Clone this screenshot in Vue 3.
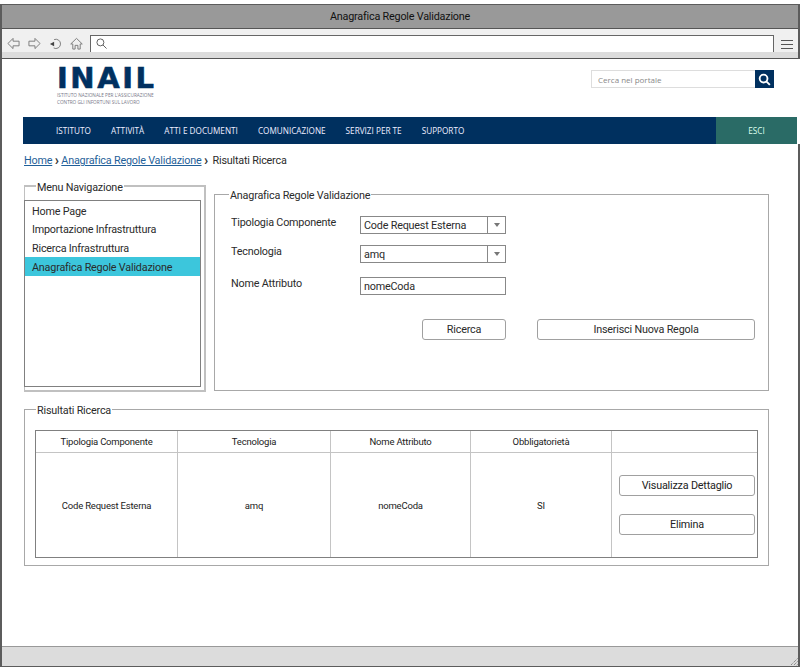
<script setup>
const navItems = ['ISTITUTO', 'ATTIVITÀ', 'ATTI E DOCUMENTI', 'COMUNICAZIONE', 'SERVIZI PER TE', 'SUPPORTO']
const menu = ['Home Page', 'Importazione Infrastruttura', 'Ricerca Infrastruttura', 'Anagrafica Regole Validazione']
const heads = ['Tipologia Componente', 'Tecnologia', 'Nome Attributo', 'Obbligatorietà', '']
</script>

<template>
  <div class="page">
    <div class="window">
      <div class="titlebar">Anagrafica Regole Validazione</div>
      <div class="toolbar">
        <div class="toolrow">
          <div class="tools">
            <svg class="ic" viewBox="0 0 14 14"><path d="M1 7 6.500 1.500V4.500H13V9.500H6.500V12.500Z" /></svg>
            <svg class="ic" viewBox="0 0 14 14"><path d="M13 7 7.500 1.500V4.500H1V9.500H7.500V12.500Z" /></svg>
            <svg class="ic" viewBox="0 0 14 14"><path d="M5.500 2.800A5 5 0 1 1 5 11.800" /><path class="solid" d="M1 7.500 5.500 5V10Z" /></svg>
            <svg class="ic" viewBox="0 0 14 14"><path d="M.8 7.500 7 1.500 13.200 7.500H11V13H8.500V9H5.500V13H3V7.500Z" /></svg>
          </div>
          <div class="address">
            <svg class="lens" viewBox="0 0 12 12"><circle cx="4.800" cy="4.800" r="3.800" /><path d="M7.600 7.600 11.500 11.500" /></svg>
          </div>
          <div class="burger"><i></i><i></i><i></i></div>
        </div>
        <div class="toolstrip"></div>
      </div>

      <div class="content">
        <header class="site">
          <div class="brandrow">
            <div class="logo">
              <svg class="logoword" viewBox="0 0 97 21"><text x="0" y="21" textLength="97" lengthAdjust="spacing">INAIL</text></svg>
              <div class="logotag">ISTITUTO NAZIONALE PER L'ASSICURAZIONE</div>
              <div class="logotag">CONTRO GLI INFORTUNI SUL LAVORO</div>
            </div>
            <div class="search">
              <span class="searchtext">Cerca nel portale</span>
              <span class="searchbtn">
                <svg viewBox="0 0 14 14"><circle cx="6" cy="6" r="4.200" /><path d="M9.200 9.200 12.800 12.800" /></svg>
              </span>
            </div>
          </div>
          <nav class="nav">
            <a v-for="item in navItems" :key="item" class="navitem">{{ item }}</a>
            <a class="esci">ESCI</a>
          </nav>
        </header>

        <main class="main">
          <div class="crumbs">
            <a class="link">Home</a><span class="sep">›</span><a class="link">Anagrafica Regole Validazione</a><span class="sep">›</span><span class="last">Risultati Ricerca</span>
          </div>

          <div class="columns">
            <fieldset class="box menubox">
              <legend>Menu Navigazione</legend>
              <ul class="menu">
                <li v-for="(m, i) in menu" :key="m" :class="['menuitem', 'm' + i, { active: i === 3 }]">{{ m }}</li>
              </ul>
            </fieldset>

            <fieldset class="box formbox">
              <legend>Anagrafica Regole Validazione</legend>
              <div class="formgrid">
                <label class="lab">Tipologia Componente</label>
                <div class="select"><span class="val">Code Request Esterna</span><span class="arrow"></span></div>
                <label class="lab">Tecnologia</label>
                <div class="select"><span class="val">amq</span><span class="arrow"></span></div>
                <label class="lab">Nome Attributo</label>
                <div class="select"><span class="val">nomeCoda</span></div>
              </div>
              <div class="actions">
                <button class="btn search-btn">Ricerca</button>
                <button class="btn new-btn">Inserisci Nuova Regola</button>
              </div>
            </fieldset>
          </div>

          <fieldset class="box results">
            <legend>Risultati Ricerca</legend>
            <div class="table">
              <div v-for="h in heads" :key="h" class="th">{{ h }}</div>
              <div class="td">Code Request Esterna</div>
              <div class="td">amq</div>
              <div class="td">nomeCoda</div>
              <div class="td">SI</div>
              <div class="td tdbtns">
                <button class="btn rowbtn">Visualizza Dettaglio</button>
                <button class="btn rowbtn">Elimina</button>
              </div>
            </div>
          </fieldset>
        </main>
      </div>

      <div class="status">
        <svg class="grip" viewBox="0 0 10 10"><path d="M9.500 2.500 2.500 9.500M9.500 5.500 5.500 9.500M9.500 8.500 8.500 9.500" /></svg>
      </div>
    </div>
  </div>
</template>

<style>
html, body { margin: 0; background: #fff; }
</style>

<style scoped>
.page {
  width: 801px;
  height: 667px;
  padding-top: 4px;
  box-sizing: border-box;
  overflow: hidden;
  font-family: Roboto, "Noto Sans", sans-serif;
  font-size: 10.800px;
  letter-spacing: -.2px;
  color: #2b2b2b;
}
.window {
  width: 800px;
  height: 663px;
  box-sizing: border-box;
  border: 2px solid #5c5c5c;
  border-top-width: 1px;
  border-bottom-width: 1px;
  display: flex;
  flex-direction: column;
}
.titlebar {
  height: 23px;
  background: #999;
  border-bottom: 1px solid #555;
  text-align: center;
  line-height: 24px;
  color: #111;
  flex: none;
}
.toolbar {
  height: 30px;
  background: #f0f0f0;
  border-bottom: 1px solid #555;
  box-sizing: border-box;
  flex: none;
  display: flex;
  flex-direction: column;
}
.toolrow { height: 23px; display: flex; align-items: flex-start; }
.toolstrip { flex: 1; background: #dcdcdc; }
.tools { display: flex; width: 88px; padding: 8px 0 0 5px; gap: 8px; box-sizing: border-box; }
.ic { width: 13px; height: 13px; fill: none; stroke: #777; stroke-width: 1; }
.ic .solid { fill: #444; stroke: none; }
.address {
  width: 684px;
  height: 17px;
  margin-top: 6px;
  background: #fff;
  border: 1px solid #666;
  border-bottom: 0;
  box-sizing: border-box;
  padding: 2px 0 0 5px;
  flex: none;
}
.lens { display: block; width: 11px; height: 11px; fill: none; stroke: #555; stroke-width: 1; }
.burger { margin: 11px 0 0 7px; width: 12px; display: flex; flex-direction: column; gap: 3px; }
.burger i { display: block; height: 1px; background: #555; }

.content { flex: 1; min-height: 0; background: #fff; }
.site {
  position: relative;
  width: 799px;
  height: 85px;
  background: #fff;
  padding-left: 21px;
  box-sizing: border-box;
  display: flex;
  flex-direction: column;
  font-family: "Open Sans", "Noto Sans", sans-serif;
  letter-spacing: 0;
}
.brandrow { height: 58px; display: flex; justify-content: space-between; }
.logo { margin: 8px 0 0 34px; }
.logoword {
  display: block;
  width: 97px;
  height: 21px;
  overflow: visible;
  font-family: "DejaVu Sans", sans-serif;
  font-weight: 700;
  font-size: 29px;
  fill: #003060;
  stroke: #003060;
  stroke-width: .6;
}
.logotag { font-size: 4.700px; line-height: 6.500px; color: #778; white-space: nowrap; }
.logoword + .logotag { margin-top: 4px; }
.search {
  display: flex;
  margin: 11px 27px 0 0;
  width: 183px;
  height: 18px;
  box-sizing: border-box;
  border: 1px solid #ddd;
  border-right: 0;
  align-items: center;
  justify-content: space-between;
}
.searchtext { font-size: 8px; color: #888; margin-left: 6px; }
.searchbtn { width: 19px; height: 18px; background: #00305f; display: flex; align-items: center; justify-content: center; margin: -1px 0; }
.searchbtn svg { width: 13px; height: 13px; fill: none; stroke: #fff; stroke-width: 2; }
.nav {
  height: 27px;
  width: 774px;
  background: #00305f;
  display: flex;
  align-items: center;
  padding-left: 33px;
  box-sizing: border-box;
  gap: 20px;
  font-size: 8.200px;
  color: #eef;
}
.navitem { white-space: nowrap; }
.esci {
  margin-left: auto;
  width: 81px;
  height: 27px;
  background: #2a6b66;
  color: #dfe;
  text-align: center;
  line-height: 27px;
}

.main { padding: 8px 0 0 22px; }
.crumbs { height: 18px; line-height: 18px; white-space: nowrap; display: flex; }
.link { color: #1f5f99; text-decoration: underline; }
.sep { margin: 0 2.500px; color: #333; font-weight: 700; font-size: 14px; line-height: 16px; }
.last { margin-left: 2px; }
.box {
  margin: 0;
  padding: 0;
  min-width: 0;
  border: 1px solid #a8a8a8;
  box-sizing: border-box;
  position: relative;
}
legend { margin-left: 11px; padding: 4px 1px 0; line-height: 14px; }
.formbox legend { margin-left: 14px; }
.columns { display: flex; align-items: flex-start; margin-top: 7px; }
.menubox {
  width: 182px;
  height: 215px;
  border-width: 2px 2px 2px 1px;
  border-color: #c0c0c0;
  padding: 0 3px 2px 0;
  display: flex;
  flex-direction: column;
}
.menu {
  list-style: none;
  margin: 5px 0 0 -1px;
  padding: 0;
  height: 187px;
  border: 1px solid #808080;
  box-sizing: border-box;
}
.menuitem { padding-left: 7px; height: 19px; line-height: 21px; white-space: nowrap; }
.m1 { height: 18px; line-height: 20px; }
.active { background: #3cc6dc; }
.formbox { width: 555px; height: 206px; margin: 8px 0 0 8px; }
.formgrid { display: grid; grid-template-columns: 129px 146px; grid-template-rows: 29px 32px 18px; margin: 13px 0 0 16px; }
.lab { line-height: 14px; white-space: nowrap; }
.select {
  height: 18px;
  border: 1px solid #888;
  box-sizing: border-box;
  display: flex;
  align-items: center;
  background: #fff;
}
.val { flex: 1; padding-left: 3px; white-space: nowrap; }
.arrow { width: 17px; height: 16px; border-left: 1px solid #888; position: relative; flex: none; }
.arrow::after {
  content: "";
  position: absolute;
  left: 6px;
  top: 6px;
  border: 3px solid transparent;
  border-top: 4px solid #777;
  border-bottom: 0;
}
.actions { display: flex; margin: 24px 0 0 207px; gap: 31px; }
.btn {
  font: inherit;
  letter-spacing: inherit;
  color: inherit;
  background: #fff;
  border: 1px solid #a0a0a0;
  border-radius: 3px;
  height: 21px;
  padding: 0;
  box-sizing: border-box;
}
.search-btn { width: 84px; }
.new-btn { width: 218px; }
.results { width: 745px; height: 166px; margin-top: 8px; }
.table {
  display: grid;
  width: 723px;
  height: 128px;
  margin: 12px 0 0 10px;
  box-sizing: border-box;
  border: 1px solid #808080;
  grid-template-columns: 142px 153px 140px 141px 1fr;
  grid-template-rows: 22px 1fr;
  font-size: 9.500px;
  text-align: center;
  color: #222;
}
.th, .td { display: flex; align-items: center; justify-content: center; border-right: 1px solid #c4c4c4; box-sizing: border-box; }
.th { border-bottom: 1px solid #c4c4c4; }
.th:nth-child(5), .td:last-child { border-right: 0; }
.tdbtns { flex-direction: column; gap: 18px; padding-left: 7px; align-items: flex-start; }
.rowbtn { width: 136px; font-size: 10.800px; }

.status {
  height: 20px;
  flex: none;
  background: #dcdcdc;
  border-top: 1px solid #999;
  box-sizing: border-box;
  display: flex;
  justify-content: flex-end;
  align-items: flex-end;
}
.grip { width: 10px; height: 10px; fill: none; stroke: #666; stroke-width: 1; stroke-dasharray: 1 1; }
</style>
